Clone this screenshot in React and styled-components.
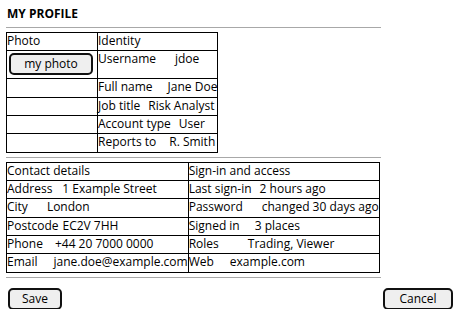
import React from 'react'
import styled, { createGlobalStyle } from 'styled-components'

const GlobalStyle = createGlobalStyle`
  body {
    margin: 0;
    background: #fff;
    color: #000;
    font-family: 'Open Sans', 'Noto Sans', sans-serif;
    font-size: 12px;
  }
`

const Page = styled.div`
  padding: 5px 4px 4px 6px;
`

const Content = styled.div`
  display: inline-flex;
  flex-direction: column;
  align-items: flex-start;
`

const Title = styled.h1`
  margin: 0;
  font-size: 12px;
  font-weight: 700;
  line-height: 17px;
  padding-left: 1px;
`

const Rule = styled.div`
  align-self: stretch;
  height: 1px;
  margin: ${p => p.$top || 5}px -1px 4px 0;
  background: #a8a8a8;
`

const Table = styled.table`
  border-collapse: collapse;
  line-height: 16.33px;
`

const Cell = styled.td`
  border: 1px solid #000;
  padding: 0 0 1px 0;
  vertical-align: top;
  white-space: nowrap;
  width: ${p => (p.$width ? p.$width + 'px' : 'auto')};
`

const Value = styled.span`
  margin-left: ${p => p.$gap}px;
`

const Button = styled.button`
  box-sizing: border-box;
  display: block;
  width: ${p => p.$width}px;
  height: 22px;
  margin: ${p => p.$margin || '0'};
  padding: 0;
  border: 2px solid #111;
  border-radius: 5px;
  background: #efefef;
  font-family: inherit;
  font-size: 12px;
  line-height: 16px;
  color: #000;
`

const ButtonBar = styled.div`
  display: flex;
  justify-content: space-between;
  margin: 6px 0 0 2px;
`

const identity = [
  { label: 'Full name', value: 'Jane Doe', gap: 15 },
  { label: 'Job title', value: 'Risk Analyst', gap: 8 },
  { label: 'Account type', value: 'User', gap: 8 },
  { label: 'Reports to', value: 'R. Smith', gap: 13 },
]

const contact = [
  { label: 'Address', value: '1 Example Street', gap: 10 },
  { label: 'City', value: 'London', gap: 19 },
  { label: 'Postcode', value: 'EC2V 7HH', gap: 4 },
  { label: 'Phone', value: '+44 20 7000 0000', gap: 12 },
  { label: 'Email', value: 'jane.doe@example.com', gap: 16 },
]

const access = [
  { label: 'Last sign-in', value: '2 hours ago', gap: 8 },
  { label: 'Password', value: 'changed 30 days ago', gap: 19 },
  { label: 'Signed in', value: '3 places', gap: 15 },
  { label: 'Roles', value: 'Trading, Viewer', gap: 29 },
  { label: 'Web', value: 'example.com', gap: 16 },
]

const Field = ({ item }) => (
  <>
    {item.label}
    <Value $gap={item.gap}>{item.value}</Value>
  </>
)

export default function App() {
  return (
    <Page>
      <GlobalStyle />
      <Content>
        <Title>MY PROFILE</Title>
        <Rule />
        <Table>
          <tbody>
            <tr>
              <Cell $width={90}>Photo</Cell>
              <Cell>Identity</Cell>
            </tr>
            <tr>
              <Cell>
                <Button $width={84} $margin="2px 0 2px 2px">my photo</Button>
              </Cell>
              <Cell>
                <Field item={{ label: 'Username', value: 'jdoe', gap: 19 }} />
              </Cell>
            </tr>
            {identity.map(item => (
              <tr key={item.label}>
                <Cell />
                <Cell><Field item={item} /></Cell>
              </tr>
            ))}
          </tbody>
        </Table>
        <Rule $top={4} />
        <Table>
          <tbody>
            <tr>
              <Cell>Contact details</Cell>
              <Cell>Sign-in and access</Cell>
            </tr>
            {contact.map((item, i) => (
              <tr key={item.label}>
                <Cell><Field item={item} /></Cell>
                <Cell><Field item={access[i]} /></Cell>
              </tr>
            ))}
          </tbody>
        </Table>
        <Rule $top={4} />
      </Content>
      <ButtonBar>
        <Button $width={54}>Save</Button>
        <Button $width={70}>Cancel</Button>
      </ButtonBar>
    </Page>
  )
}
